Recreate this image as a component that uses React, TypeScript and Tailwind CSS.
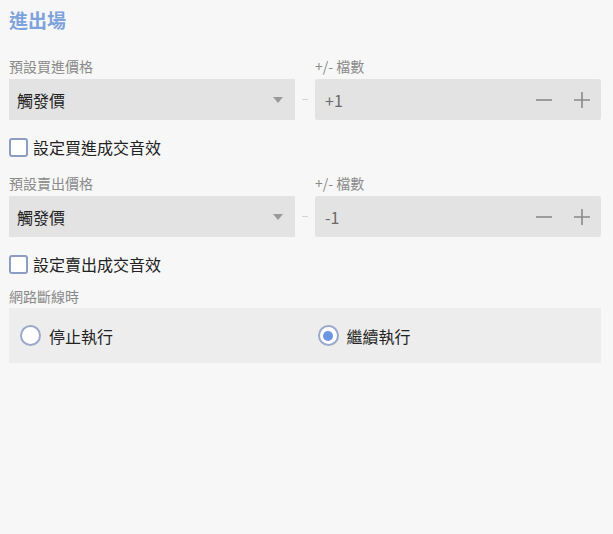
const font = { fontFamily: '"Noto Sans CJK TC", "Noto Sans", sans-serif' };

function Label({ children }: { children: React.ReactNode }) {
  return <div className="text-[14px] leading-[18px] text-[#8a8a8a]">{children}</div>;
}

function PriceRow({ label, value }: { label: string; value: string }) {
  return (
    <div className="flex items-end">
      <div className="w-[286px]">
        <Label>{label}</Label>
        <div className="mt-[4px] h-[41px] bg-[#e3e3e3] flex items-center justify-between pl-[8px] pr-[12px]">
          <span className="text-[16px] text-[#222]">觸發價</span>
          <svg width="10" height="6" viewBox="0 0 10 6">
            <path d="M0 0 L10 0 L5 6 Z" fill="#9a9a9a" />
          </svg>
        </div>
      </div>
      <div className="w-[20px] h-[41px] flex items-center justify-center">
        <div className="w-[6px] h-px bg-[#d4d4d4]" />
      </div>
      <div className="w-[286px]">
        <Label>+/- 檔數</Label>
        <div className="mt-[4px] h-[41px] bg-[#e3e3e3] rounded-[2px] flex items-center pl-[10px] pr-[10px]">
          <span className="flex-1 text-[16px] text-[#6a6a6a]">{value}</span>
          <svg width="18" height="18" viewBox="0 0 18 18" className="mr-[20px]">
            <path d="M1 9 H17" stroke="#8a8a8a" strokeWidth="1.6" />
          </svg>
          <svg width="18" height="18" viewBox="0 0 18 18">
            <path d="M1 9 H17 M9 1 V17" stroke="#8a8a8a" strokeWidth="1.6" />
          </svg>
        </div>
      </div>
    </div>
  );
}

function Check({ label }: { label: string }) {
  return (
    <div className="flex items-center h-[22px]">
      <div className="w-[19px] h-[19px] border-2 border-[#8d9cc2] rounded-[3px] bg-white" />
      <span className="ml-[5px] text-[16px] text-[#222]">{label}</span>
    </div>
  );
}

function Radio({ label, checked }: { label: string; checked?: boolean }) {
  return (
    <div className="flex items-center">
      <div className="w-[21px] h-[21px] rounded-full border-2 border-[#9aa8cc] bg-white flex items-center justify-center">
        {checked && <div className="w-[10px] h-[10px] rounded-full bg-[#6d96e2]" />}
      </div>
      <span className="ml-[8px] text-[16px] text-[#222]">{label}</span>
    </div>
  );
}

export default function App() {
  return (
    <div className="w-[613px] h-[534px] bg-[#f7f7f7] px-[9px] pt-[8px]" style={font}>
      <h1 className="text-[19px] leading-[24px] font-bold text-[#7ea3dc]">進出場</h1>

      <div className="mt-[25px]">
        <PriceRow label="預設買進價格" value="+1" />
      </div>
      <div className="mt-[16px]">
        <Check label="設定買進成交音效" />
      </div>

      <div className="mt-[16px]">
        <PriceRow label="預設賣出價格" value="-1" />
      </div>
      <div className="mt-[16px]">
        <Check label="設定賣出成交音效" />
      </div>

      <div className="mt-[12px]">
        <Label>網路斷線時</Label>
      </div>
      <div className="mt-[3px] w-[592px] h-[55px] bg-[#eeeded] grid grid-cols-2 items-center pl-[11px]">
        <Radio label="停止執行" />
        <div className="pl-[7px]">
          <Radio label="繼續執行" checked />
        </div>
      </div>
    </div>
  );
}
